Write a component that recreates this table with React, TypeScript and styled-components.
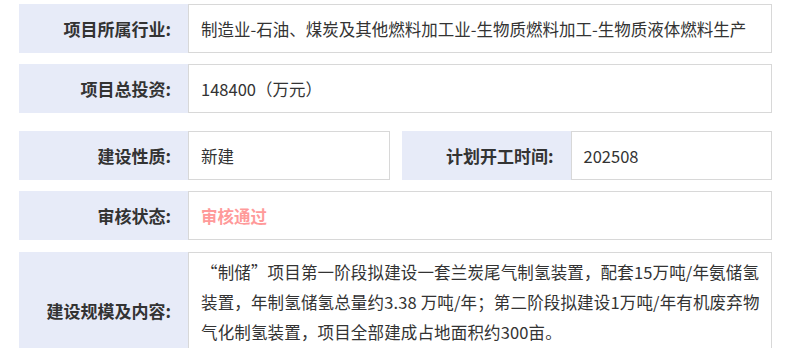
import * as React from "react";
import styled, { createGlobalStyle } from "styled-components";

const GlobalStyle = createGlobalStyle`
    body {
        margin: 0;
        background: #fff;
        font-family: "Noto Sans CJK SC", "Noto Sans", sans-serif;
        color: #333;
    }
`;

const Sheet = styled.section`
    width: 753px;
    padding: 4px 0 0 19px;
`;

const Row = styled.div<{ gapTop?: number }>`
    display: flex;
    gap: 12px;
    margin-top: ${props => props.gapTop ?? 11}px;

    &:first-child {
        margin-top: 0;
    }
`;

const Field = styled.div<{ tall?: boolean }>`
    display: flex;
    flex: 1;
    height: ${props => (props.tall ? 116 : 49)}px;
`;

const Label = styled.div`
    display: flex;
    align-items: center;
    justify-content: flex-end;
    flex: 0 0 169px;
    padding-right: 17px;
    box-sizing: border-box;
    background: #e7ebf8;
    font-size: 17px;
    font-weight: 700;
    color: #333;
`;

const Value = styled.div<{ status?: boolean }>`
    display: flex;
    align-items: center;
    flex: 1;
    min-width: 0;
    padding: 0 12px;
    border: 1px solid #d8d8d8;
    font-size: 16.5px;
    white-space: nowrap;
    color: ${props => (props.status ? "#ff9a9a" : "#333")};
    font-weight: ${props => (props.status ? 700 : 400)};
`;

const Paragraph = styled(Value)`
    display: block;
    padding: 4px 0 20px 12px;
    line-height: 30px;
    letter-spacing: 0.15px;
`;

const App: React.FunctionComponent = () => (
    <Sheet>
        <GlobalStyle />
        <Row>
            <Field>
                <Label>项目所属行业:</Label>
                <Value>制造业-石油、煤炭及其他燃料加工业-生物质燃料加工-生物质液体燃料生产</Value>
            </Field>
        </Row>
        <Row>
            <Field>
                <Label>项目总投资:</Label>
                <Value>148400（万元）</Value>
            </Field>
        </Row>
        <Row gapTop={18}>
            <Field>
                <Label>建设性质:</Label>
                <Value>新建</Value>
            </Field>
            <Field>
                <Label>计划开工时间:</Label>
                <Value>202508</Value>
            </Field>
        </Row>
        <Row>
            <Field>
                <Label>审核状态:</Label>
                <Value status>审核通过</Value>
            </Field>
        </Row>
        <Row gapTop={12}>
            <Field tall>
                <Label>建设规模及内容:</Label>
                <Paragraph>
                    “制储”项目第一阶段拟建设一套兰炭尾气制氢装置，配套15万吨/年氨储氢
                    <br />
                    装置，年制氢储氢总量约3.38 万吨/年；第二阶段拟建设1万吨/年有机废弃物
                    <br />
                    气化制氢装置，项目全部建成占地面积约300亩。
                </Paragraph>
            </Field>
        </Row>
    </Sheet>
);

export default App;
